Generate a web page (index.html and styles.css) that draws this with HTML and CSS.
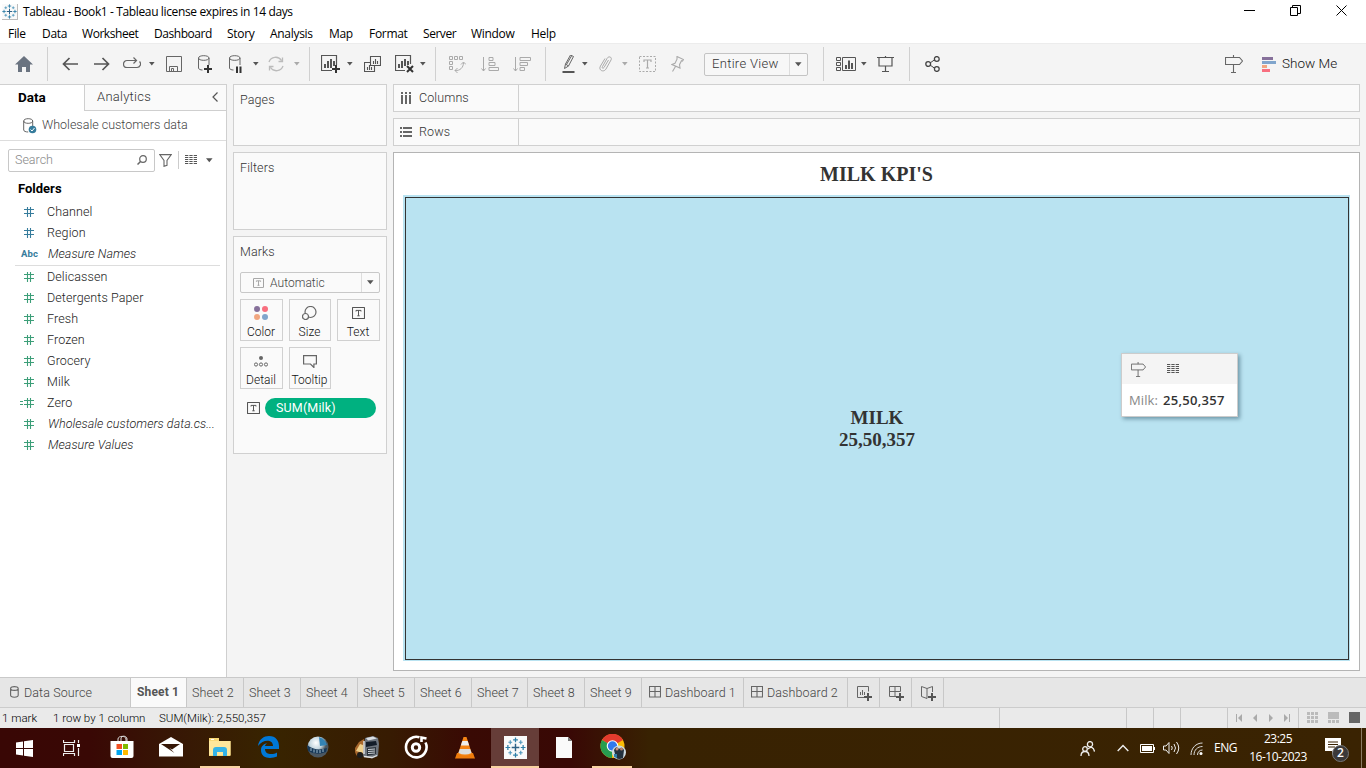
FILE: index.html
```html
<!DOCTYPE html>
<html lang="en">
<head>
<meta charset="utf-8">
<title>Tableau - Book1</title>
<link rel="stylesheet" href="styles.css">
</head>
<body>
<svg class="sprite" aria-hidden="true">
  <symbol id="caret" viewBox="0 0 6 4"><path d="M0 0h5.6L2.8 3.6z" fill="currentColor"/></symbol>
  <symbol id="hash" viewBox="0 0 12 12"><path d="M1 3.500h10M1 7.500h10M4.500 1v10M7.500 1v10" stroke="currentColor" stroke-width="1.100" fill="none"/></symbol>
  <symbol id="sign" viewBox="0 0 18 18"><path d="M.5 2.500h14l3 3.500-3 3.500H.5zM8.500 0v2.500M8.500 9.500V17.500M6 17.500h5" fill="none" stroke="#666" stroke-width="1.1"/></symbol>
  <symbol id="table" viewBox="0 0 12 10"><path d="M0 .5h12M0 2.500h12M0 4.500h12M0 6.500h12M0 8.500h12" stroke="#555" stroke-dasharray="3.300 1.050"/></symbol>
  <symbol id="tbox" viewBox="0 0 13 12"><rect x=".5" y=".5" width="12" height="11" rx=".5" fill="none" stroke="currentColor" stroke-width="1.100"/><path d="M4 4.500V3.400h5v1.100M6.500 3.400v5.400M5.300 8.800h2.400" fill="none" stroke="currentColor"/></symbol>
  <symbol id="dash" viewBox="0 0 12 12"><path d="M1 .5h10.500v10.500H.5V.5zM6 .5V11M.5 5.500h11" fill="none" stroke="#666" stroke-width="1.100"/></symbol>
  <symbol id="spark" viewBox="0 0 22 22"><path d="M11 7v8M7 11h8" stroke="#2f6286" stroke-width="1.500"/><path d="M11 .5v5M8.500 3h5M11 16.500v5M8.500 19h5M3 8.500v5M.5 11h5M19 8.500v5M16.500 11h5" stroke="#2e7fa8" stroke-width="1.300"/><path d="M5.500 3.500v4M3.500 5.500h4M16.500 3.500v4M14.500 5.500h4M5.500 14.500v4M3.500 16.500h4M16.500 14.500v4M14.500 16.500h4" stroke="#4f97bc" stroke-width="1.200"/></symbol>
</svg>
<div class="app">
  <header class="titlebar">
    <svg class="logo" width="16" height="16" viewBox="0 0 22 22"><use href="#spark"/></svg>
    <span class="apptitle">Tableau - Book1 - Tableau license expires in 14 days</span>
    <div class="wincontrols">
      <svg width="11" height="11"><path d="M0 5.500h11" stroke="#000"/></svg>
      <svg width="11" height="11"><path d="M.5 2.500h7v8h-7zM2.500 2.500v-2h8v8h-3" fill="none" stroke="#000"/></svg>
      <svg width="11" height="11"><path d="M.5.5l10 10M10.500.5l-10 10" stroke="#000"/></svg>
    </div>
  </header>
  <nav class="menu"><span class="m1">File</span><span class="m2">Data</span><span class="m3">Worksheet</span><span class="m4">Dashboard</span><span class="m5">Story</span><span class="m6">Analysis</span><span class="m7">Map</span><span class="m8">Format</span><span class="m9">Server</span><span class="m10">Window</span><span class="m11">Help</span></nav>

  <div class="toolbar">
    <div class="grp g1"><i><svg width="18" height="16"><path d="M9 0l9 8.500h-3V16h-4v-5H7v5H3V8.500H0z" fill="#6a7380"/></svg></i></div>
    <div class="grp g2">
      <i><svg width="16" height="14"><path d="M16 7H1.500M7.500 1L1.500 7l6 6" fill="none" stroke="#555" stroke-width="1.700"/></svg></i>
      <i><svg width="16" height="14"><path d="M0 7h14.500M8.500 1l6 6-6 6" fill="none" stroke="#555" stroke-width="1.700"/></svg></i>
      <i class="w28"><svg width="18" height="14"><path d="M13 3.500H4a3.500 3.500 0 0 0 0 7h10a3.500 3.500 0 0 0 2.500-6M10.500.5l3 3-3 3" fill="none" stroke="#666" stroke-width="1.200"/></svg></i>
      <i class="w12"><svg class="car"><use href="#caret"/></svg></i>
      <i><svg width="16" height="16"><path d="M.5.5h15v15H.5zM3.500 15.500v-5h8v5M5.500 15v-2.500h2V15" fill="none" stroke="#666"/></svg></i>
      <i><svg width="16" height="18"><path d="M.5 3v10c0 1.300 2 2 4 2M.5 3C.5-.1 11-.1 11 3S.5 6.100.5 3M11 3v7" fill="none" stroke="#666"/><path d="M6 14h8M10 10v8" stroke="#333" stroke-width="2"/></svg></i>
      <i class="w28"><svg width="14" height="18"><path d="M.5 3v10c0 1.300 2 2 4 2M.5 3C.5-.1 11-.1 11 3S.5 6.100.5 3M11 3v7" fill="none" stroke="#666"/><path d="M8 11.500V18M11.500 11.500V18" stroke="#333" stroke-width="2"/></svg></i>
      <i class="w12"><svg class="car"><use href="#caret"/></svg></i>
      <i class="w28"><svg width="18" height="16"><path d="M2 6a7 7 0 0 1 12.500-1.500M16 10A7 7 0 0 1 3.500 11.500M15.500 1.500v4h-4M2.500 14.500v-4h4" fill="none" stroke="#bbb" stroke-width="1.300"/></svg></i>
      <i class="w14"><svg class="car dim"><use href="#caret"/></svg></i>
    </div>
    <div class="grp g3">
      <i class="w28"><svg width="19" height="18"><path d="M11 15.500H.5V.5h15V10" fill="none" stroke="#555" stroke-width="1.200"/><path d="M4 9v4M7 6v7M10 4v9M13 6v5" stroke="#555" stroke-width="2"/><path d="M11 14h8M15 10v8" stroke="#333" stroke-width="2"/></svg></i>
      <i class="w10"><svg class="car"><use href="#caret"/></svg></i>
      <i><svg width="17" height="17"><path d="M6.500.5h10v9h-10zM6.500 6.500h-6v9h10v-6" fill="none" stroke="#555" stroke-width="1.100"/><path d="M9.500 5v3M11.500 3v5M13.500 5v3M3.500 11v3M5.500 9v5M7.500 11v3" stroke="#555" stroke-width="1.100"/></svg></i>
      <i><svg width="19" height="18"><path d="M10 15.500H.5V.5h15V9" fill="none" stroke="#555" stroke-width="1.200"/><path d="M4 9v4M7 6v7M10 4v7M13 6v4" stroke="#555" stroke-width="2"/><path d="M12 11l6 6M18 11l-6 6" stroke="#333" stroke-width="2"/></svg></i>
      <i class="w6"><svg class="car"><use href="#caret"/></svg></i>
    </div>
    <div class="grp g4">
      <i><svg width="17" height="17"><path d="M.5.500h3v3h-3zM5.500.5h3v3h-3zM10.500.5h3v3h-3zM.5 5.500h3v3h-3zM.5 10.500h3v3h-3zM6 14.500c5 .5 8.500-3 8.500-8M12 8.500l2.500-2.500L17 8.500M8.500 12L6 14.500 8.500 17" fill="none" stroke="#aaa"/></svg></i>
      <i class="asc"><svg width="18" height="15"><path d="M2.500 0v14M.5 11.500l2 2.500 2-2.500M8 .5h4v3H8zM8 5.500h6v3H8zM8 10.500h9.500v3H8z" fill="none" stroke="#aaa"/></svg></i>
      <i><svg width="18" height="15"><path d="M2.500 0v14M.5 11.500l2 2.500 2-2.500M7 .5h10.500v3H7zM7 5.500h7.500v3H7zM7 10.500h4.500v3H7z" fill="none" stroke="#aaa"/></svg></i>
    </div>
    <div class="grp g5">
      <i class="w28"><svg width="13" height="18"><path d="M3.500 9L8.500 0l3 1.500-5 9.500zM3.500 9l-1 4.500L6.500 11M9.500 1L4.500 9.500" fill="none" stroke="#666"/><path d="M.500 17h12" stroke="#555" stroke-width="2"/></svg></i>
      <i class="w6"><svg class="car"><use href="#caret"/></svg></i>
      <i class="w34"><svg width="13" height="16"><path d="M9.500 4L5 11.500c-1 1.500-2.500.5-1.500-1L8 2.500C9.500-.5 13.500 1 12 4L7 13c-2.500 4-8 1-5.500-3L6 2.500" fill="none" stroke="#aaa"/></svg></i>
      <i class="w6"><svg class="car dim"><use href="#caret"/></svg></i>
      <i class="tt"><svg width="17" height="16"><path d="M.5.500h16v15H.5z" fill="none" stroke="#aaa" stroke-dasharray="2 1.500"/><path d="M5 6V4h7v2M8.500 4v8M7 12h3" fill="none" stroke="#aaa" stroke-width="1.200"/></svg></i>
      <i class="w28"><svg width="13" height="16"><path d="M6 .5l6.500 3-1 1.500-1-.3-2 4 .5 3.300L1 8.500l3-1.300 2-4zM4.500 10.500L1.500 15.500" fill="none" stroke="#aaa" stroke-width="1.100"/></svg></i>
      <div class="select"><span>Entire View</span><b><svg class="car2"><use href="#caret"/></svg></b></div>
    </div>
    <div class="grp g6">
      <i><svg width="20" height="14"><path d="M.5.500h4v3h-4zM.5 5.500h4v3h-4zM.5 10.500h4v3h-4zM6.500.5h13v13h-13z" fill="none" stroke="#555"/><path d="M10 8v4M13 3.500V12M16 6v6" stroke="#555" stroke-width="2"/></svg></i>
      <i class="w4"><svg class="car"><use href="#caret"/></svg></i>
      <i class="present"><svg width="17" height="16"><path d="M0 1.500h17M2 1.500v8.500h13V1.500M8.500 0v1M8.500 10v5M5 15.500h7" fill="none" stroke="#555" stroke-width="1.200"/></svg></i>
    </div>
    <div class="grp g7"><i><svg width="15" height="16"><path d="M5 7l5-3.500M5 9l5 3.500" stroke="#444"/><g fill="none" stroke="#444" stroke-width="1.300"><circle cx="3.200" cy="8" r="2.400"/><circle cx="11.800" cy="3" r="2.400"/><circle cx="11.800" cy="13" r="2.400"/></g></svg></i></div>
    <div class="showme"><svg width="18" height="18"><use href="#sign"/></svg><svg class="bars" width="14" height="15"><path d="M0 0h11v3H0z" fill="#86709a"/><path d="M0 4h14v3H0z" fill="#80a5cc"/><path d="M0 8h5v3H0z" fill="#f1a680"/><path d="M0 12h8v3H0z" fill="#f86f7f"/></svg><span>Show Me</span></div>
  </div>

  <main class="work">
    <aside class="side">
      <div class="sidetabs"><b>Data</b><div><span>Analytics</span><svg width="6" height="10"><path d="M5.500.5L1 5l4.500 4.500" fill="none" stroke="#555" stroke-width="1.200"/></svg></div></div>
      <div class="source"><svg width="14" height="16"><path d="M.7 3v9c0 1.200 2 2 4.500 2M.7 3C.7-.1 9.700-.1 9.700 3s-9 3.100-9 0M9.700 3v5" fill="none" stroke="#666"/><circle cx="9.500" cy="11.500" r="3.800" fill="#367c9c"/><path d="M7.500 11.500l1.500 1.500 2.500-3" fill="none" stroke="#fff"/></svg><span>Wholesale customers data</span></div>
      <div class="find"><div class="search"><span>Search</span><svg width="10" height="10"><circle cx="6" cy="4" r="3.300" fill="none" stroke="#666" stroke-width="1.200"/><path d="M3.500 6.500L.5 9.500" stroke="#666" stroke-width="1.500"/></svg></div>
        <svg class="funnel" width="13" height="13"><path d="M.7.600h11.600L8 6.500v4.800L5 12.300V6.500z" fill="none" stroke="#666" stroke-width="1.100"/></svg><em></em><svg width="12" height="10"><use href="#table"/></svg><svg class="car2 fcar"><use href="#caret"/></svg></div>
      <h3>Folders</h3>
      <ul class="fields dims"><li><svg><use href="#hash"/></svg>Channel</li><li><svg><use href="#hash"/></svg>Region</li><li class="it"><small>Abc</small><span>Measure Names</span></li></ul>
      <ul class="fields meas"><li><svg><use href="#hash"/></svg>Delicassen</li><li><svg><use href="#hash"/></svg>Detergents Paper</li><li><svg><use href="#hash"/></svg>Fresh</li><li><svg><use href="#hash"/></svg>Frozen</li><li><svg><use href="#hash"/></svg>Grocery</li><li><svg><use href="#hash"/></svg>Milk</li><li class="calc"><svg class="eq" viewBox="0 0 3 12"><path d="M0 4.500h3M0 7.500h3" stroke="currentColor"/></svg><svg><use href="#hash"/></svg>Zero</li><li class="it"><svg><use href="#hash"/></svg><span>Wholesale customers data.cs...</span></li><li class="it"><svg><use href="#hash"/></svg><span>Measure Values</span></li></ul>
    </aside>

    <section class="cards">
      <div class="card pages">Pages</div>
      <div class="card filters">Filters</div>
      <div class="card marks"><div>Marks</div>
        <div class="marktype"><svg width="11" height="10"><use href="#tbox"/></svg><span>Automatic</span><b><svg class="car2"><use href="#caret"/></svg></b></div>
        <div class="buttons">
          <div><svg width="14" height="14"><circle cx="3" cy="3" r="3" fill="#86709a"/><circle cx="11" cy="3" r="3" fill="#f86f7f"/><circle cx="3" cy="11" r="3" fill="#f1a680"/><circle cx="11" cy="11" r="3" fill="#80a5cc"/></svg><span>Color</span></div>
          <div><svg width="15" height="14"><circle cx="8.500" cy="6" r="5.500" fill="none" stroke="#666" stroke-width="1.200"/><circle cx="3.500" cy="10.500" r="3" fill="#fafafa" stroke="#666" stroke-width="1.200"/></svg><span>Size</span></div>
          <div><svg class="gray" width="13" height="12"><use href="#tbox"/></svg><span>Text</span></div>
          <div><svg width="14" height="11"><circle cx="7" cy="2" r="2" fill="#666"/><g fill="none" stroke="#666"><circle cx="2" cy="8.500" r="1.600"/><circle cx="7" cy="8.500" r="1.600"/><circle cx="12" cy="8.500" r="1.600"/></g></svg><span>Detail</span></div>
          <div><svg width="14" height="13"><path d="M.6.600h12.800v8.400h-2.500v3.500L7.500 9H.6z" fill="none" stroke="#666" stroke-width="1.200"/></svg><span>Tooltip</span></div>
        </div>
        <div class="pillrow"><svg class="gray" width="13" height="12"><use href="#tbox"/></svg><span>SUM(Milk)</span></div>
      </div>
    </section>

    <section class="canvas">
      <div class="shelf"><div><svg width="12" height="12"><path d="M2 0v2M6 0v2M10 0v2M2 3v9M6 3v9M10 3v9" stroke="#666" stroke-width="2"/></svg><span>Columns</span></div></div>
      <div class="shelf"><div><svg width="12" height="12"><path d="M0 2h2M0 6h2M0 10h2M3 2h9M3 6h9M3 10h9" stroke="#666" stroke-width="2"/></svg><span>Rows</span></div></div>
      <div class="viz"><h1>MILK KPI'S</h1><div class="mark"><div class="cell"><p>MILK</p><p>25,50,357</p>
        <div class="tip"><div class="tiphead"><svg width="15" height="15"><use href="#sign"/></svg><svg width="12" height="10"><use href="#table"/></svg></div><div class="tipbody"><span>Milk:</span><b>25,50,357</b></div></div>
      </div></div></div>
    </section>
  </main>

  <div class="tabs">
    <div class="ds"><svg width="9" height="12"><path d="M.6 2.500v6.800c0 2.500 7.600 2.500 7.600 0V2.500C8.200 0 .6 0 .6 2.500s7.600 2.500 7.600 0" fill="none" stroke="#666" stroke-width="1.100"/></svg><span>Data Source</span></div>
    <div class="on">Sheet 1</div><div>Sheet 2</div><div>Sheet 3</div><div>Sheet 4</div><div>Sheet 5</div><div>Sheet 6</div><div class="n">Sheet 7</div><div>Sheet 8</div><div>Sheet 9</div>
    <div class="d1"><svg width="12" height="12"><use href="#dash"/></svg>Dashboard 1</div><div class="d2"><svg width="12" height="12"><use href="#dash"/></svg>Dashboard 2</div>
    <div class="add"><svg width="16" height="15"><path d="M7 11.500H.5V.5h11v5M3.500 6v3M5.500 4v5M7.500 6v3" fill="none" stroke="#666"/><path d="M7 11h8M11 7v8" stroke="#555" stroke-width="2"/></svg></div>
    <div class="add"><svg width="16" height="15"><path d="M7 10.500H.5V.5h11v5M6 .5v10M.5 5.500h11" fill="none" stroke="#666"/><path d="M7 11h8M11 7v8" stroke="#555" stroke-width="2"/></svg></div>
    <div class="add"><svg width="16" height="15"><path d="M6 2.500L.5.500v10l5.500 2V2.500L11.500.500V6" fill="none" stroke="#666"/><path d="M7 11h8M11 7v8" stroke="#555" stroke-width="2"/></svg></div>
    <div class="rest"></div>
  </div>
  <div class="status"><span class="s1">1 mark</span><span class="s2">1 row by 1 column</span><span class="s3">SUM(Milk): 2,550,357</span>
    <div class="boxes"><i></i><i></i><i></i><i></i>
      <div class="arrows"><svg width="56" height="8"><path d="M7 0v8L3 4zM1 0h1v8H1zM22 0v8l-4-4zM34 0v8l4-4zM49 0v8l4-4zM54 0h1v8h-1z" fill="#aaa"/></svg></div>
      <div class="views"><svg width="54" height="11"><path d="M0 0h3v3H0zM4 0h3v3H4zM8 0h3v3H8zM0 4h3v3H0zM4 4h3v3H4zM8 4h3v3H8zM0 8h3v3H0zM4 8h3v3H4zM8 8h3v3H8zM21 0h11v7H21zM21 8h3v3h-3zM25 8h3v3h-3zM29 8h3v3h-3z" fill="#bbb"/><path d="M42 0h11v11H42z" fill="#666"/></svg></div></div>
  </div>

  <footer class="taskbar">
    <div class="start"><svg width="17" height="17"><path d="M0 2.500l7-1v6.500H0zM8 1.300L17 0v8H8zM0 9h7v6.500l-7-1zM8 9h9v8l-9-1.300z" fill="#fff"/></svg></div>
    <div class="start"><svg width="18" height="16"><path d="M1.500 4.500h9v7h-9zM.5 0v2.500h11V0M.5 16v-2.500h11V16M15.500 0v3M15.500 8v8" fill="none" stroke="#eee" stroke-width="1.200"/><path d="M14 4h3v3h-3z" fill="#fff"/></svg></div>
    <div class="task first"><svg width="24" height="24"><path d="M8 7V4c0-3.500 8-3.500 8 0v3M11 6V3c1-3 6-2 6 1v3" fill="none" stroke="#ddd"/><path d="M.5 6h23v15q0 2-2 2h-19q-2 0-2-2z" fill="#fff"/><path d="M6.500 9H12v5H6.500z" fill="#f25022"/><path d="M13 9h5v5h-5z" fill="#7fba00"/><path d="M6.500 15H12v5H6.500z" fill="#00a4ef"/><path d="M13 15h5v5h-5z" fill="#ffb900"/></svg></div>
    <div class="task"><svg width="24" height="20"><path d="M0 7L12 0l12 7v12.500H0z" fill="#fff"/><path d="M2 7h19l-8 5.500-2.500-1.500 5 5z" fill="#351606"/></svg></div>
    <div class="task run part"><svg width="22" height="20"><path d="M0 1h10v3h11.500v15H0z" fill="#f9d978"/><path d="M0 4h21.500v14H0z" fill="#ffe79b"/><path d="M2 2h3v1H2z" fill="#fff"/><path d="M4 19v-6q0-3 3-3h8q3 0 3 3v6h-4v-4H8v4z" fill="#35b4e7"/></svg></div>
    <div class="task"><svg width="21" height="22"><path d="M0 10C1 3 6 0 11 0c7 0 10 5 10 10v3H7c0 6 8 6 12 3.500v4C13 23 3 23 3 14c0-4 3-6 6-7-2 2-2 3-2 3h8c0-7-10-7-15 0z" fill="#0078d7"/></svg></div>
    <div class="task"><svg width="22" height="22"><defs><radialGradient id="orb" cx=".4" cy=".3"><stop offset="0" stop-color="#fff"/><stop offset=".6" stop-color="#c4d6df"/><stop offset="1" stop-color="#4b5761"/></radialGradient></defs><circle cx="11" cy="11" r="10.500" fill="url(#orb)"/><path d="M0 9q9 7 20 3l-1 4q-9 4-18-1z" fill="#173858"/><path d="M12 1q6 2 8 8l-7 1z" fill="#3383b4"/><path d="M4 12v3M7 13.500v3M10 14v3M13 14v3M16 13v3" stroke="#9fb9c9"/></svg></div>
    <div class="task"><svg width="24" height="23"><path d="M0 12l4-6 5-3v16l-7 1q-3-4-2-8z" fill="#a9682c"/><path d="M1 15l4-7 3 1v8z" fill="#efd08b"/><path d="M10 2l8-2 5 2 1 6-1 12-6 2.500-9-2z" fill="#6d747d"/><path d="M11 2l7-1.500 4 2-9 2z" fill="#d9dee3"/><path d="M11 6l10-1 1 4-11 2z" fill="#131c28"/><path d="M12 12l9-1v7l-9 2z" fill="#2c333b"/><path d="M13 13.500l7-.5M13 15.500l7-.5M13 17.500l7-.5" stroke="#cdd3d9"/><path d="M9 5v13" stroke="#dbe0e4" stroke-width="1.500"/><circle cx="5" cy="19" r="3" fill="#1c1c1c"/><path d="M9 20.500l8 1 5-2" stroke="#e4e4e4" stroke-width="1.300" fill="none"/></svg></div>
    <div class="task"><svg width="24" height="24"><path d="M15.500 2.300A10.300 10.300 0 1 0 21.500 7.500" fill="none" stroke="#fff" stroke-width="2.600"/><path d="M17.500 7V2.500l5 1" fill="none" stroke="#fff" stroke-width="2.600"/><circle cx="12" cy="12.500" r="3.700" fill="none" stroke="#fff" stroke-width="3"/></svg></div>
    <div class="task"><svg width="20" height="23"><path d="M2 17h16l2 5.500H0z" fill="#ef7b0b"/><path d="M8.500 1h3L17 18q-7 4-14 0z" fill="#f58414"/><path d="M7.300 5h5.400l1.500 4.500H5.800z" fill="#eee"/><path d="M4.800 13h10.400l1.400 4q-6.600 3-13.200 0z" fill="#ddd"/></svg></div>
    <div class="task run active"><svg width="23" height="23"><path d="M0 0h23v23H0z" fill="#fafafa"/><use href="#spark" x="1" y="1" width="21" height="21"/></svg></div>
    <div class="task"><svg width="16" height="21"><path d="M0 0h12l4 4v17H0z" fill="#fafafa"/><path d="M12 0v4h4z" fill="#777"/></svg></div>
    <div class="task run chromecell"><svg width="27" height="26"><circle cx="12.500" cy="12" r="12" fill="#fbbc05"/><path d="M12.500 12L2 6a12 12 0 0 1 21 0z" fill="#e33b2e"/><path d="M12.500 12L2 6a12 12 0 0 0 10 18z" fill="#269d50"/><path d="M4 6q7-8 19 0H12z" fill="#e33b2e"/><circle cx="12.500" cy="12" r="5.800" fill="#fff"/><circle cx="12.500" cy="12" r="4.700" fill="#3179ed"/><circle cx="19" cy="18.500" r="7" fill="#cfdbe1"/><path d="M14 16q2-5 5-1 3-3 5 1l-1 8q-4 2-7 0z" fill="#24313e"/><circle cx="17" cy="15" r="1.500" fill="#c98d77"/><circle cx="21.500" cy="15" r="1.500" fill="#b9846e"/><path d="M14 20h3v4l-3-1z" fill="#3180aa"/></svg></div>
    <div class="tray">
      <svg width="15" height="15"><g fill="none" stroke="#eee" stroke-width="1.300"><circle cx="10" cy="3.200" r="2.600"/><circle cx="5" cy="8" r="2.300"/><path d="M1 15q0-4.500 4-4.500T9 15M8 8q5-4 6.500 2.500"/></g></svg>
      <svg class="t2" width="12" height="8"><path d="M.7 7L6 1.500 11.300 7" fill="none" stroke="#eee" stroke-width="1.400"/></svg>
      <svg class="t3" width="15" height="9"><path d="M.5.500h13v8H.5z" fill="none" stroke="#fff"/><path d="M2 2h10v5H2zM14 3h1v3h-1z" fill="#fff"/></svg>
      <svg class="t4" width="17" height="14"><path d="M.5 5h2.500l3-3.500v11L3 9H.5zM8.500 5q1.500 2 0 4M11 3q3 4 0 8M13.500 1q4.500 6 0 12" fill="none" stroke="#eee"/></svg>
      <svg class="t5" width="13" height="13"><path d="M1 13C1 6 6 1 12.500 1M4 13c0-5 3.500-8.500 8.500-8.500M7.500 13c0-3 2-5 5-5" fill="none" stroke="#ddd"/><circle cx="11" cy="11.500" r="1.500" fill="#fff"/></svg>
      <span class="lang">ENG</span>
      <div class="clock"><span>23:25</span><span>16-10-2023</span></div>
      <div class="note"><svg width="24" height="25"><path d="M0 0h16v13h-5l-4 4v-4H0z" fill="#fff"/><path d="M3 4h10M3 6.500h10M3 9h7" stroke="#3a2302"/><circle cx="15.500" cy="15.500" r="8" fill="#3b3939" stroke="#777"/></svg><b>2</b></div>
      <div class="peek"></div>
    </div>
  </footer>
</div>
</body>
</html>
```
FILE: styles.css
```css
* { box-sizing: border-box; }
body { margin: 0; overflow: hidden; background: #f4f4f4; color: #333; font: 300 12.5px/16px Roboto, "Open Sans", sans-serif; }
svg { display: block; flex: none; }
.sprite { display: none; }
.app { width: 1366px; height: 768px; display: flex; flex-direction: column; }

.titlebar { height: 24px; background: #fff; display: flex; align-items: center; color: #000; font: 12px/16px "Open Sans", sans-serif; }
.logo { margin: 0 5px 1px 2px; background: #fafafa; border-right: 1px solid #bbb; border-bottom: 1px solid #bbb; }
.apptitle { letter-spacing: -0.37px; }
.wincontrols { margin: 0 19px 4px auto; display: flex; gap: 35px; }
.menu { height: 19px; background: #fff; color: #000; display: flex; gap: 16px; padding: 2px 0 0 8px; font: 12px/16px "Open Sans", sans-serif; letter-spacing: -0.3px; }
.menu span { flex: none; white-space: nowrap; }
.m1 { width: 18px; } .m2 { width: 24px; } .m3 { width: 56px; letter-spacing: -.45px; } .m4 { width: 57px; letter-spacing: -.45px; }
.m5 { width: 27px; } .m6 { width: 43px; } .m7 { width: 24px; } .m8 { width: 38px; }
.m9 { width: 32px; letter-spacing: -.45px; } .m10 { width: 44px; } .m11 { width: 26px; }

.toolbar { height: 41px; background: #f4f4f4; border-top: 1px solid #ececec; display: flex; align-items: center; }
.grp { height: 34px; display: flex; align-items: center; flex: none; border-left: 1px solid #d0d0d0; }
.toolbar i { width: 32px; display: flex; justify-content: center; flex: none; }
.g1 { width: 47px; border: 0; padding-left: 8px; }
.g2 { width: 262px; padding-left: 6px; }
.g3 { width: 126px; padding-left: 6px; }
.g4 { width: 110px; padding-left: 5px; }
.g5 { width: 278px; padding-left: 8px; }
.g6 { width: 86px; padding-left: 6px; }
.g7 { width: 100px; padding-left: 6px; }
.toolbar .w4 { width: 4px; } .toolbar .w6 { width: 6px; } .toolbar .w10 { width: 12px; } .toolbar .w12 { width: 12px; }
.toolbar .w14 { width: 14px; } .toolbar .w28 { width: 28px; } .toolbar .w34 { width: 34px; }
.toolbar .asc { margin-left: 1px; } .toolbar .tt { margin-left: 3px; } .toolbar .present { margin-left: 3px; }
.car { width: 6px; height: 4px; color: #555; }
.car.dim { color: #aaa; }
.car2 { width: 7px; height: 5px; color: #555; }
.select { margin-left: 13px; width: 104px; height: 23px; border: 1px solid #c4c4c4; border-radius: 2px; background: #f7f7f7; display: flex; align-items: center; padding-left: 7px; font-size: 13px; letter-spacing: 0.3px; color: #333; }
.select b, .marktype b { margin-left: auto; width: 18px; height: 100%; border-left: 1px solid #ddd; display: grid; place-items: center; }
.showme { margin-left: auto; width: 141px; display: flex; align-items: center; color: #111; font-size: 13.500px; white-space: nowrap; }
.showme span { margin-top: -2px; }
.bars { margin: 0 6px 0 19px; }

.work { height: 593px; display: flex; }
.side { width: 227px; background: #fff; border-right: 1px solid #cfcfcf; border-top: 1px solid #d0d0d0; }
.sidetabs { height: 26px; display: flex; align-items: stretch; font-size: 13px; }
.sidetabs b { width: 84px; padding: 4px 0 0 18px; color: #000; font-weight: 700; font-size: 13.500px; }
.sidetabs div { flex: 1; border-left: 1px solid #cfcfcf; border-bottom: 1px solid #cfcfcf; background: #fafafa; display: flex; justify-content: space-between; padding: 4px 8px 0 12px; letter-spacing: .25px; }
.sidetabs svg { margin-top: 3px; }
.source { height: 30px; border-bottom: 1px solid #ddd; display: flex; align-items: center; padding-left: 23px; color: #444; }
.source span { margin: -2px 0 0 5px; }
.find { height: 24px; margin: 7px 0 0 8px; display: flex; align-items: center; }
.search { width: 147px; height: 23px; border: 1px solid #c8c8c8; display: flex; align-items: center; justify-content: space-between; padding: 0 7px 0 6px; color: #888; border-radius: 2px; }
.funnel { margin-left: 4px; }
.find em { height: 18px; width: 1px; background: #ccc; margin: 0 6px; }
.fcar { margin-left: 9px; }
h3 { margin: 9px 0 0 18px; font-size: 13px; line-height: 16px; color: #000; }
.fields { list-style: none; margin: 0 6px 0 15px; padding: 4px 0 1px; }
.fields li { height: 21px; padding-left: 8px; display: flex; align-items: center; color: #222; letter-spacing: .1px; }
.fields li svg { width: 12px; height: 12px; margin: 1px 12px 0 0; color: #367c9c; }
.meas { border-top: 1px solid #ddd; padding-top: 0; }
.meas li svg { color: #3c9e78; }
.fields .calc { padding-left: 5px; }
.fields .calc .eq { width: 3px; margin-right: 0; }
.it span { font-style: italic; margin-left: 1px; letter-spacing: .05px; }
.fields small { width: 26px; margin-left: -2px; font: bold 9.500px/12px Roboto, sans-serif; color: #367c9c; }

.cards { width: 154px; margin-left: 6px; color: #333; }
.card { border: 1px solid #d0d0d0; background: #fafafa; padding: 7px 6px; margin-bottom: 6px; letter-spacing: .1px; }
.pages { height: 62px; } .filters { height: 78px; } .marks { height: 218px; }
.marktype { margin-top: 12px; height: 21px; width: 140px; border: 1px solid #c8c8c8; border-radius: 2px; display: flex; align-items: center; padding-left: 12px; font-size: 12px; color: #444; letter-spacing: .05px; }
.marktype svg { color: #999; } .marktype .car2 { color: #555; }
.marktype span { margin-left: 6px; }
.buttons { margin-top: 6px; display: grid; grid-template-columns: 43px 42px 43px; gap: 6px; }
.buttons div { height: 42px; border: 1px solid #d0d0d0; display: grid; grid-template-rows: 26px 12px; place-items: center; font-size: 12px; line-height: 12px; color: #111; letter-spacing: 0; padding-right: 1px; }
.gray { color: #555; }
.pillrow { display: flex; align-items: center; margin: 9px 0 0 7px; gap: 5px; }
.pillrow span { width: 111px; height: 20px; border-radius: 10px; background: #00b180; color: #fff; padding: 2px 0 0 11px; font-weight: 400; font-size: 12.500px; letter-spacing: 0.150px; }

.canvas { width: 967px; margin-left: 6px; }
.shelf { height: 28px; border: 1px solid #d0d0d0; background: #fafafa; margin-bottom: 6px; }
.shelf div { width: 125px; height: 26px; border-right: 1px solid #d0d0d0; display: flex; align-items: center; padding-left: 6px; gap: 7px; color: #333; letter-spacing: .1px; }
.viz { height: 519px; border: 1px solid #b4b4b4; background: #fff; padding: 10px 9px 0; }
h1 { margin: 0; height: 32px; text-align: center; font: bold 20px/22px "Liberation Serif", serif; color: #333; }
.mark { height: 466px; background: #b9e3f1; padding: 2px 1px 1px 2px; }
.cell { position: relative; height: 463px; border: 1px solid #333; text-align: center; padding-top: 209px; font: bold 19px/22px "Liberation Serif", serif; color: #333; }
.cell p { margin: 0; }
.tip { position: absolute; left: 715px; top: 155px; width: 117px; height: 64px; border: 1px solid #ccc; background: #fff; box-shadow: 2px 2px 4px rgba(0,40,60,.4); font: 13px/16px "Open Sans", sans-serif; text-align: left; }
.tiphead { height: 30px; background: #f4f4f4; display: flex; align-items: center; padding-left: 9px; gap: 21px; }
.tipbody { padding: 8px 0 0 7px; display: flex; gap: 5px; color: #888; letter-spacing: .1px; }
.tipbody b { font-weight: 600; color: #333; letter-spacing: .3px; }

.tabs { height: 31px; background: #e6e6e6; border-top: 1px solid #c9c9c9; border-bottom: 1px solid #ccc; display: flex; color: #444; letter-spacing: .1px; }
.tabs > div { width: 57px; flex: none; border-left: 1px solid #c8c8c8; display: flex; align-items: center; padding-left: 5px; white-space: nowrap; }
.tabs .ds { width: 130px; border: 0; padding-left: 10px; }
.ds span { margin-left: 5px; }
.ds svg { margin-bottom: 2px; }
.tabs .on { width: 56px; background: #fafafa; font-weight: bold; font-size: 12px; padding: 0 0 2px 6px; letter-spacing: .15px; color: #555; }
.tabs .n { width: 56px; }
.tabs .d1 { width: 102px; padding-left: 7px; } .tabs .d2 { width: 104px; padding-left: 7px; }
.d1 svg, .d2 svg { margin: 0 4px 2px 0; }
.tabs .add { width: 32px; padding: 2px 0 0 9px; }
.tabs .rest { flex: 1; }
.status { height: 20px; background: #eaeaea; display: flex; align-items: center; font-size: 11.5px; color: #000; }
.s1 { width: 51px; padding-left: 2px; } .s2 { width: 108px; padding-left: 2px; }
.boxes { margin-left: auto; display: flex; height: 20px; align-items: stretch; }
.boxes i { border-left: 1px solid #c8c8c8; width: 27px; }
.boxes i:first-child { width: 127px; } .boxes i:nth-child(4) { width: 47px; }
.arrows { border-left: 1px solid #c8c8c8; width: 71px; padding: 6px 0 0 7px; }
.views { border-left: 1px solid #c8c8c8; width: 68px; padding: 4px 0 0 8px; }

.taskbar { height: 40px; display: flex; background: linear-gradient(90deg, #390705 0, #390805 90px, #371605 170px, #382400 270px, #371b02 390px, #390a04 465px, #390805 570px, #382202 650px, #3a2302 100%); color: #fff; }
.start { width: 48px; display: grid; place-items: center; }
.task { width: 49px; border-bottom: 2px solid transparent; display: grid; place-items: center; }
.first { margin-left: 1px; }
.run { border-bottom-color: #f9d3a2; }
.task.active { width: 48px; margin-left: 2px; background: #663d38; }
.task.chromecell { padding-left: 3px; width: 40px; margin-left: 4px; }
.task.part { width: 40px; margin: 0 4px 0 5px; }
.tray { margin-left: auto; display: flex; align-items: center; font: 12px/18px "Open Sans", sans-serif; }
.t2 { margin-left: 22px; } .t3 { margin-left: 11px; } .t4 { margin-left: 8px; } .t5 { margin-left: 10px; }
.lang { width: 24px; margin-left: 11px; letter-spacing: -.5px; }
.clock { width: 60px; margin-left: 10px; display: flex; flex-direction: column; align-items: center; letter-spacing: -.5px; white-space: nowrap; }
.note { position: relative; margin: 5px 0 0 17px; width: 24px; height: 25px; }
.note b { position: absolute; left: 12px; top: 7px; font: 600 12px/16px "Open Sans", sans-serif; }
.peek { height: 40px; width: 5px; margin-left: 12px; border-left: 1px solid #8a7c64; }
```
